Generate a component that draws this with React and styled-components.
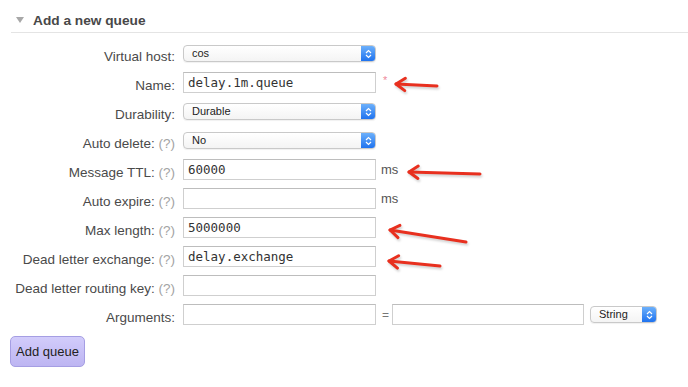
import React from 'react';
import styled, { createGlobalStyle } from 'styled-components';

const GlobalStyle = createGlobalStyle`
  html, body {
    margin: 0;
    padding: 0;
    background: #ffffff;
  }
  body {
    font-family: "Liberation Sans", Arial, sans-serif;
    color: #444;
  }
`;

const Page = styled.div`
  position: relative;
  width: 688px;
  height: 387px;
  overflow: hidden;
`;

const Header = styled.div`
  display: flex;
  align-items: center;
  gap: 9px;
  height: 33px;
  box-sizing: border-box;
  margin-left: 11px;
  padding: 8px 0 0 5px;
  border-bottom: 1px solid #e4e4e4;
`;

const Triangle = styled.span`
  width: 0;
  height: 0;
  border-left: 4.5px solid transparent;
  border-right: 4.5px solid transparent;
  border-top: 6px solid #a8a8a8;
`;

const Title = styled.h2`
  margin: 0;
  font-size: 13.7px;
  font-weight: bold;
  color: #484848;
`;

const Form = styled.div`
  display: flex;
  flex-direction: column;
  margin-top: 6px;
`;

const Row = styled.div`
  display: flex;
  align-items: center;
  height: 29px;
`;

const Label = styled.label`
  width: 175px;
  flex: none;
  text-align: right;
  font-size: 13.5px;
  color: #4a4a4a;
  padding-top: 5px;
  margin-right: 8px;
  white-space: nowrap;
`;

const Help = styled.span`
  color: #a3a3a3;
`;

const TextInput = styled.div`
  width: ${p => p.$w || 193}px;
  height: 21px;
  box-sizing: border-box;
  border: 1px solid #cfcfcf;
  border-top-color: #bdbdbd;
  background: #fff;
  padding: 0 4px;
  display: flex;
  align-items: center;
  font-family: "DejaVu Sans Mono", "Liberation Mono", monospace;
  font-size: 12.5px;
  color: #333;
`;

const SelectBox = styled.div`
  width: ${p => p.$w || 193}px;
  height: 17px;
  margin-left: ${p => p.$ml || 0}px;
  box-sizing: border-box;
  display: flex;
  border: 1px solid #c9c9c9;
  border-radius: 4px;
  background: linear-gradient(#ffffff, #f4f4f4);
  overflow: hidden;
  box-shadow: 0 1px 1px rgba(0, 0, 0, 0.06);
`;

const SelectText = styled.span`
  flex: 1;
  padding-left: 8px;
  font-size: 11px;
  line-height: 15px;
  color: #222;
`;

const SelectButton = styled.span`
  width: 14px;
  flex: none;
  display: flex;
  align-items: center;
  justify-content: center;
  background: linear-gradient(#6cb0fb, #1f73ef);
`;

const Unit = styled.span`
  margin-left: 5px;
  font-size: 13px;
  color: #555;
`;

const Required = styled.span`
  margin-left: 7px;
  margin-top: -6px;
  font-size: 11px;
  color: #ee8a9a;
`;

const Equals = styled.span`
  margin: 0 3px 0 6px;
  font-size: 12px;
  color: #777;
`;

const Button = styled.button`
  margin: 7px 0 0 10px;
  width: 75px;
  height: 31px;
  border: 1px solid #a59ee3;
  border-radius: 5px;
  background: linear-gradient(#d2ccfb, #bdb5f2);
  font-family: "Liberation Sans", Arial, sans-serif;
  font-size: 13px;
  color: #222;
  padding: 0;
`;

const Overlay = styled.svg`
  position: absolute;
  top: 0;
  left: 0;
  pointer-events: none;
  filter: drop-shadow(1px 2px 1px rgba(0, 0, 0, 0.18));
`;

function Select({ value, w, ml }) {
  return (
    <SelectBox $w={w} $ml={ml}>
      <SelectText>{value}</SelectText>
      <SelectButton>
        <svg width="7" height="10" viewBox="0 0 7 10">
          <path d="M1 4 L3.5 1.5 L6 4 M1 6 L3.5 8.5 L6 6" fill="none" stroke="#fff" strokeWidth="1.2" />
        </svg>
      </SelectButton>
    </SelectBox>
  );
}

function Arrow({ tip, tail }) {
  const [tx, ty] = tip;
  const [sx, sy] = tail;
  const ang = Math.atan2(sy - ty, sx - tx);
  const len = 11;
  const spread = 0.6;
  const b1 = [tx + len * Math.cos(ang + spread), ty + len * Math.sin(ang + spread)];
  const b2 = [tx + len * Math.cos(ang - spread), ty + len * Math.sin(ang - spread)];
  return (
    <g stroke="#e8301f" strokeWidth="3" strokeLinecap="round" strokeLinejoin="round" fill="none">
      <path d={`M${sx} ${sy} L${tx} ${ty}`} />
      <path d={`M${b1[0]} ${b1[1]} L${tx} ${ty} L${b2[0]} ${b2[1]}`} />
    </g>
  );
}

const fields = [
  { label: 'Virtual host:', kind: 'select', value: 'cos' },
  { label: 'Name:', kind: 'input', value: 'delay.1m.queue', required: true },
  { label: 'Durability:', kind: 'select', value: 'Durable' },
  { label: 'Auto delete:', help: true, kind: 'select', value: 'No' },
  { label: 'Message TTL:', help: true, kind: 'input', value: '60000', unit: 'ms' },
  { label: 'Auto expire:', help: true, kind: 'input', value: '', unit: 'ms' },
  { label: 'Max length:', help: true, kind: 'input', value: '5000000' },
  { label: 'Dead letter exchange:', help: true, kind: 'input', value: 'delay.exchange' },
  { label: 'Dead letter routing key:', help: true, kind: 'input', value: '' },
];

export default function App() {
  return (
    <Page>
      <GlobalStyle />
      <Header>
        <Triangle />
        <Title>Add a new queue</Title>
      </Header>
      <Form>
        {fields.map(f => (
          <Row key={f.label}>
            <Label>
              {f.label}
              {f.help && <Help> (?)</Help>}
            </Label>
            {f.kind === 'select' ? <Select value={f.value} /> : <TextInput>{f.value}</TextInput>}
            {f.required && <Required>*</Required>}
            {f.unit && <Unit>{f.unit}</Unit>}
          </Row>
        ))}
        <Row>
          <Label>Arguments:</Label>
          <TextInput />
          <Equals>=</Equals>
          <TextInput $w={192} />
          <Select value="String" w={67} ml={6} />
        </Row>
      </Form>
      <Button>Add queue</Button>
      <Overlay width="688" height="387">
        <Arrow tip={[396, 84]} tail={[437, 86]} />
        <Arrow tip={[409, 172]} tail={[480, 174]} />
        <Arrow tip={[390, 230]} tail={[466, 242]} />
        <Arrow tip={[389, 261]} tail={[440, 266]} />
      </Overlay>
    </Page>
  );
}
